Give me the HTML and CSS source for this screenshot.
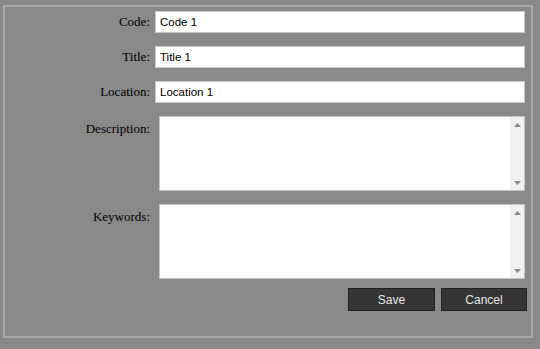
FILE: index.html
```html
<!DOCTYPE html>
<html>
<head>
  <title>Edit Item</title>
  <link rel="stylesheet" href="styles.css">
</head>
<body>
  <div id="dialog">
    <form id="itemForm">
      <label for="code">Code:</label>
      <input type="text" id="code" name="code" value="Code 1">

      <label for="title">Title:</label>
      <input type="text" id="title" name="title" value="Title 1">

      <label for="location">Location:</label>
      <input type="text" id="location" name="location" value="Location 1">

      <label for="description" class="top">Description:</label>
      <div class="area">
        <textarea id="description" name="description"></textarea>
        <div class="scroll">
          <svg width="7" height="4" viewBox="0 0 7 4"><path d="M0 4 L3.5 0 L7 4 Z" fill="#8a8a8a"/></svg>
          <svg width="7" height="4" viewBox="0 0 7 4"><path d="M0 0 L3.5 4 L7 0 Z" fill="#8a8a8a"/></svg>
        </div>
      </div>

      <label for="keywords" class="top">Keywords:</label>
      <div class="area">
        <textarea id="keywords" name="keywords"></textarea>
        <div class="scroll">
          <svg width="7" height="4" viewBox="0 0 7 4"><path d="M0 4 L3.5 0 L7 4 Z" fill="#8a8a8a"/></svg>
          <svg width="7" height="4" viewBox="0 0 7 4"><path d="M0 0 L3.5 4 L7 0 Z" fill="#8a8a8a"/></svg>
        </div>
      </div>

      <div class="buttons">
        <button type="submit">Save</button>
        <button type="button">Cancel</button>
      </div>
    </form>
  </div>
</body>
</html>
```

FILE: styles.css
```css
body {
  background-color: #898989;
  margin: 0;
  padding: 5px 0 0 3px;
  font-family: "Liberation Serif", "Times New Roman", serif;
}

#dialog {
  width: 530px;
  height: 333px;
  box-sizing: border-box;
  border: 2px solid #a9a9a9;
  padding: 4px 4px 0 0;
}

form {
  display: grid;
  grid-template-columns: 145px 1fr;
  column-gap: 5px;
  row-gap: 13px;
}

label {
  font-size: 13px;
  color: #000;
  text-align: right;
  align-self: center;
}

label.top {
  align-self: start;
  padding-top: 5px;
}

input {
  width: 370px;
  height: 22px;
  box-sizing: border-box;
  border: 1px solid #c9c9c9;
  background-color: #fff;
  padding: 0 4px;
  font-family: "Liberation Sans", Arial, sans-serif;
  font-size: 11.5px;
  color: #000;
  outline: none;
}

.area {
  display: flex;
  width: 366px;
  height: 75px;
  box-sizing: border-box;
  margin-left: 4px;
  border: 1px solid #c4c4c4;
  background-color: #fff;
}

.area textarea {
  flex: 1;
  border: none;
  resize: none;
  outline: none;
  padding: 2px;
  overflow: hidden;
}

.scroll {
  width: 14px;
  background-color: #f1f1f1;
  display: flex;
  flex-direction: column;
  justify-content: space-between;
  align-items: center;
  padding: 6px 0 5px;
}

.buttons {
  grid-column: 2;
  display: flex;
  justify-content: flex-end;
  gap: 6px;
  margin-top: -4px;
}

button {
  width: 87px;
  height: 23px;
  background-color: #353535;
  border: 1px solid #222;
  color: #e6e6e6;
  font-family: "Liberation Sans", Arial, sans-serif;
  font-size: 12px;
  cursor: pointer;
}

button + button {
  width: 86px;
}
```
